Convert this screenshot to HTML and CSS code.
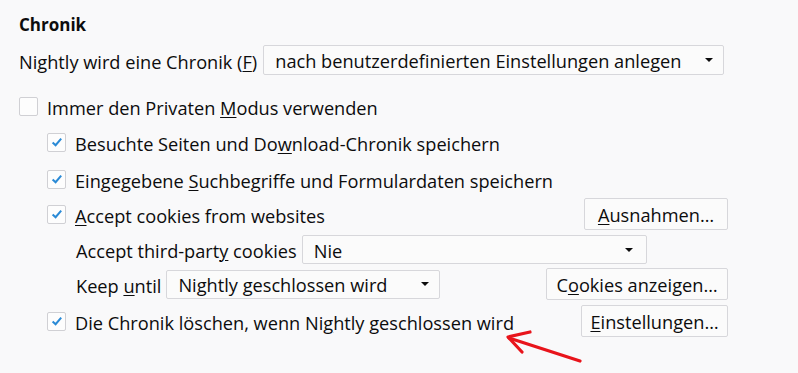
FILE: index.html
```html
<!DOCTYPE html>
<html lang="de">
<head>
<meta charset="utf-8">
<title>Chronik</title>
<link rel="stylesheet" href="styles.css">
</head>
<body>
<div class="pane">
  <h2 class="heading">Chronik</h2>

  <div class="row row-mode">
    <span class="label">Nightly wird eine Chronik (<u>F</u>)</span>
    <div class="select select-mode"><span class="txt">nach benutzerdefinierten Einstellungen anlegen</span><i class="caret"></i></div>
  </div>

  <div class="row row-private">
    <span class="box"></span>
    <span class="label">Immer den Privaten <u>M</u>odus verwenden</span>
  </div>

  <div class="sub">
    <div class="row row-check r-visited">
      <span class="box checked"><svg viewBox="0 0 14 14" width="14" height="14"><path d="M2.6 7.4 L5.6 10.2 L11.2 3.6" fill="none" stroke="#2a8ad6" stroke-width="2"/></svg></span>
      <span class="label">Besuchte Seiten und Do<u>w</u>nload-Chronik speichern</span>
    </div>
    <div class="row row-check r-forms">
      <span class="box checked"><svg viewBox="0 0 14 14" width="14" height="14"><path d="M2.6 7.4 L5.6 10.2 L11.2 3.6" fill="none" stroke="#2a8ad6" stroke-width="2"/></svg></span>
      <span class="label">Eingegebene <u>S</u>uchbegriffe und Formulardaten speichern</span>
    </div>
    <div class="row row-btn r-cookies">
      <div class="group">
        <span class="box checked"><svg viewBox="0 0 14 14" width="14" height="14"><path d="M2.6 7.4 L5.6 10.2 L11.2 3.6" fill="none" stroke="#2a8ad6" stroke-width="2"/></svg></span>
        <span class="label"><u>A</u>ccept cookies from websites</span>
      </div>
      <button class="btn btn-exc"><u>A</u>usnahmen…</button>
    </div>

    <div class="nested">
      <div class="row r-third">
        <span class="label">Accept third-part<u>y</u> cookies</span>
        <div class="select select-third"><span class="txt">Nie</span><i class="caret"></i></div>
      </div>
      <div class="row row-btn r-keep">
        <div class="group">
          <span class="label">Keep <u>u</u>ntil</span>
          <div class="select select-keep"><span class="txt">Nightly geschlossen wird</span><i class="caret"></i></div>
        </div>
        <button class="btn btn-show">C<u>o</u>okies anzeigen…</button>
      </div>
    </div>

    <div class="row row-btn r-clear">
      <div class="group">
        <span class="box checked"><svg viewBox="0 0 14 14" width="14" height="14"><path d="M2.6 7.4 L5.6 10.2 L11.2 3.6" fill="none" stroke="#2a8ad6" stroke-width="2"/></svg></span>
        <span class="label">Die Chronik löschen, wenn Ni<u>g</u>htly geschlossen wird</span>
      </div>
      <button class="btn btn-settings"><u>E</u>instellungen…</button>
    </div>
  </div>
</div>

<svg class="arrow" width="90" height="40" viewBox="0 0 90 40">
  <path d="M80 34 L9 11" fill="none" stroke="#e8141b" stroke-width="3.2" stroke-linecap="round"/>
  <path d="M30 5 L8 10 L22 25" fill="none" stroke="#e8141b" stroke-width="3.2" stroke-linecap="round" stroke-linejoin="round"/>
</svg>
</body>
</html>
```

FILE: styles.css
```css
html, body {
  margin: 0;
  padding: 0;
  background: #f9f9fa;
}
body {
  font-family: "Open Sans", "Noto Sans", sans-serif;
  font-size: 18.2px;
  color: #0c0c0d;
  position: relative;
  width: 798px;
  height: 373px;
  overflow: hidden;
}
.pane {
  padding-left: 19px;
  width: 709px;
}
.heading {
  margin: 13px 0 0;
  height: 24px;
  line-height: 24px;
  font-size: 17px;
  font-weight: 700;
}
.row {
  display: flex;
  align-items: center;
}
.row-btn {
  justify-content: space-between;
}
.group {
  display: flex;
  align-items: center;
}
.label {
  white-space: nowrap;
  padding-top: 3px;
}
.txt {
  padding-top: 2px;
}
u {
  text-decoration-thickness: 1px;
  text-underline-offset: 2px;
}
.row-mode {
  margin-top: 8px;
  height: 30px;
}
.row-mode .label {
  margin-right: 6px;
}
.select {
  box-sizing: border-box;
  display: flex;
  align-items: center;
  justify-content: space-between;
  border: 1px solid #d7d7db;
  border-radius: 2px;
  background: #fbfbfb;
  white-space: nowrap;
}
.select-mode {
  width: 461px;
  height: 30px;
  padding: 0 10px 0 11px;
}
.select-third {
  width: 345px;
  height: 29px;
  padding: 0 13px 0 11px;
  margin-left: 5px;
}
.select-keep {
  width: 274px;
  height: 29px;
  padding: 0 10px 0 11px;
  margin-left: 5px;
}
.caret {
  width: 0;
  height: 0;
  border-left: 4px solid transparent;
  border-right: 4px solid transparent;
  border-top: 4px solid #0c0c0d;
}
.box {
  box-sizing: border-box;
  width: 19px;
  height: 19px;
  border: 1px solid #d0d0d4;
  border-radius: 2px;
  background: #fdfdfd;
  display: flex;
  align-items: center;
  justify-content: center;
  margin-right: 9px;
  flex: none;
}
.row-private {
  margin-top: 21px;
  height: 20px;
}
.sub {
  padding-left: 28px;
}
.r-visited {
  margin-top: 16px;
  height: 20px;
}
.r-forms {
  margin-top: 17px;
  height: 20px;
}
.r-cookies {
  margin-top: 9px;
  height: 32px;
}
.nested {
  padding-left: 29px;
}
.r-third {
  margin-top: 5px;
  height: 29px;
}
.r-keep {
  margin-top: 4px;
  height: 32px;
}
.r-clear {
  margin-top: 5px;
  height: 32px;
}
.btn {
  box-sizing: border-box;
  height: 32px;
  border: 1px solid #d7d7db;
  border-radius: 2px;
  background: #fbfbfb;
  font: inherit;
  color: inherit;
  padding: 2px 0 0;
  text-align: center;
  white-space: nowrap;
}
.btn-exc { width: 144px; }
.btn-show { width: 182px; }
.btn-settings { width: 147px; }
.arrow {
  position: absolute;
  left: 500px;
  top: 327px;
}
```
